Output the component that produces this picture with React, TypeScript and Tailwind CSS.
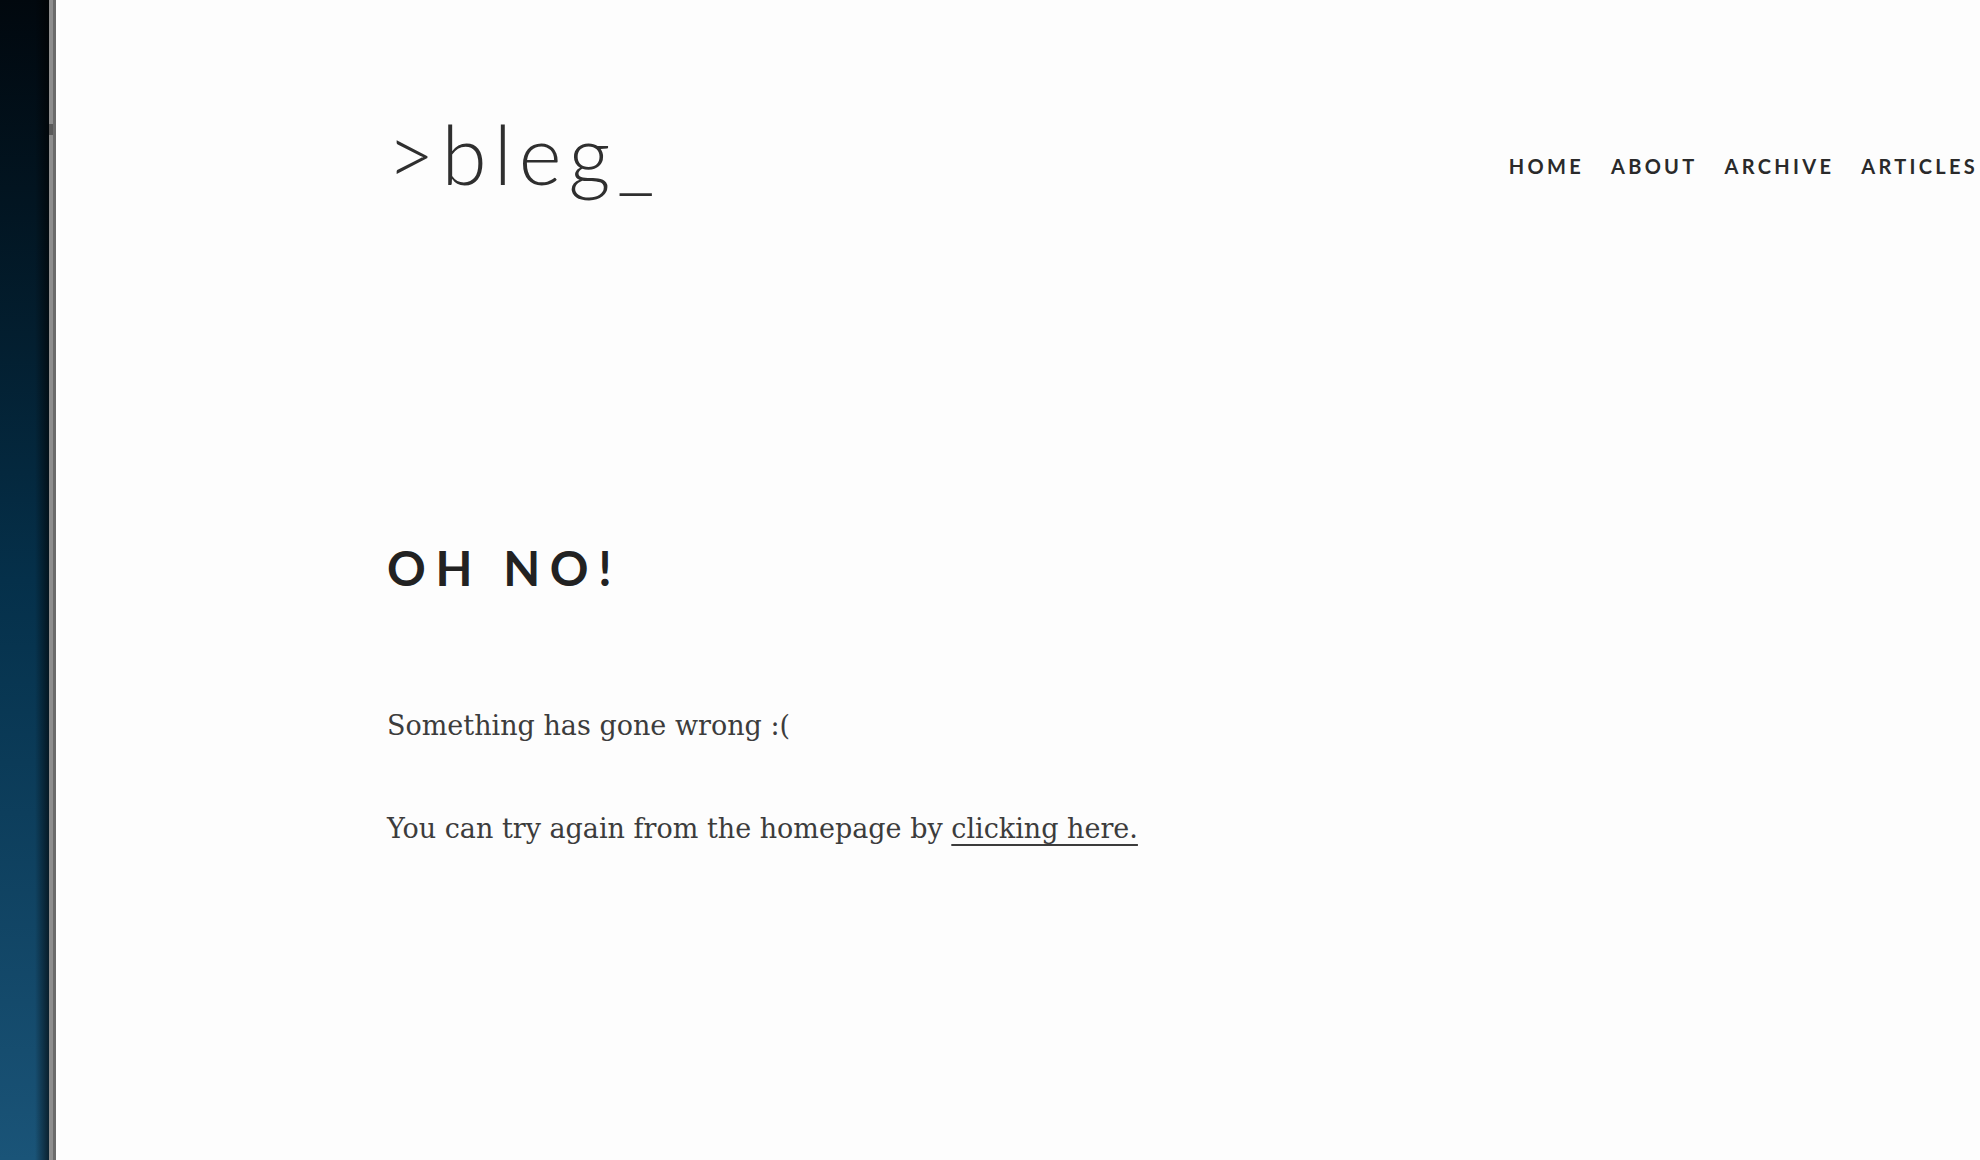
import React from 'react';

const navLinks = ['Home', 'About', 'Archive', 'Articles'];

export default function App() {
  return (
    <div className="flex h-[1160px] w-[1980px] overflow-hidden bg-[#fdfdfd]">
      {/* desktop edge behind the window */}
      <div className="relative w-[49px] shrink-0 bg-gradient-to-b from-[#01080e] via-[#05304a] to-[#1a5478]">
        <div className="absolute inset-y-0 right-0 w-[14px] bg-gradient-to-r from-transparent to-black/60" />
      </div>
      <div className="relative flex w-[7px] shrink-0">
        <div className="w-[4px] bg-[#8e8e8e]" />
        <div className="w-[3px] bg-[#6b6b6b]" />
        <div className="absolute left-0 top-[124px] h-[11px] w-[4px] bg-[#5a5a5a]" />
      </div>

      <main className="flex-1 pl-[331px] font-['Lato',sans-serif]">
        <header className="flex items-start justify-between">
          <a className="mt-[112px] block text-[82px] font-light leading-none tracking-[0.085em] text-[#2f2f2f]">
            &gt;bleg_
          </a>
          <nav className="mt-[156px] flex gap-[27px] pr-[2px]">
            {navLinks.map((l) => (
              <a key={l} className="text-[20px] font-bold uppercase leading-none tracking-[0.165em] text-[#2a2a2a]">
                {l}
              </a>
            ))}
          </nav>
        </header>

        <section className="mt-[350px]">
          <h1 className="text-[48px] font-bold uppercase leading-none tracking-[0.2em] text-[#222]">Oh no!</h1>
          <div className="mt-[120px] space-y-[76px] font-['DejaVu_Serif',serif] text-[27px] leading-none text-[#3c3c3c]">
            <p>Something has gone wrong :(</p>
            <p>
              You can try again from the homepage by{' '}
              <a className="underline decoration-[2px] underline-offset-[6px] [text-decoration-skip-ink:none]">clicking here.</a>
            </p>
          </div>
        </section>
      </main>
    </div>
  );
}
